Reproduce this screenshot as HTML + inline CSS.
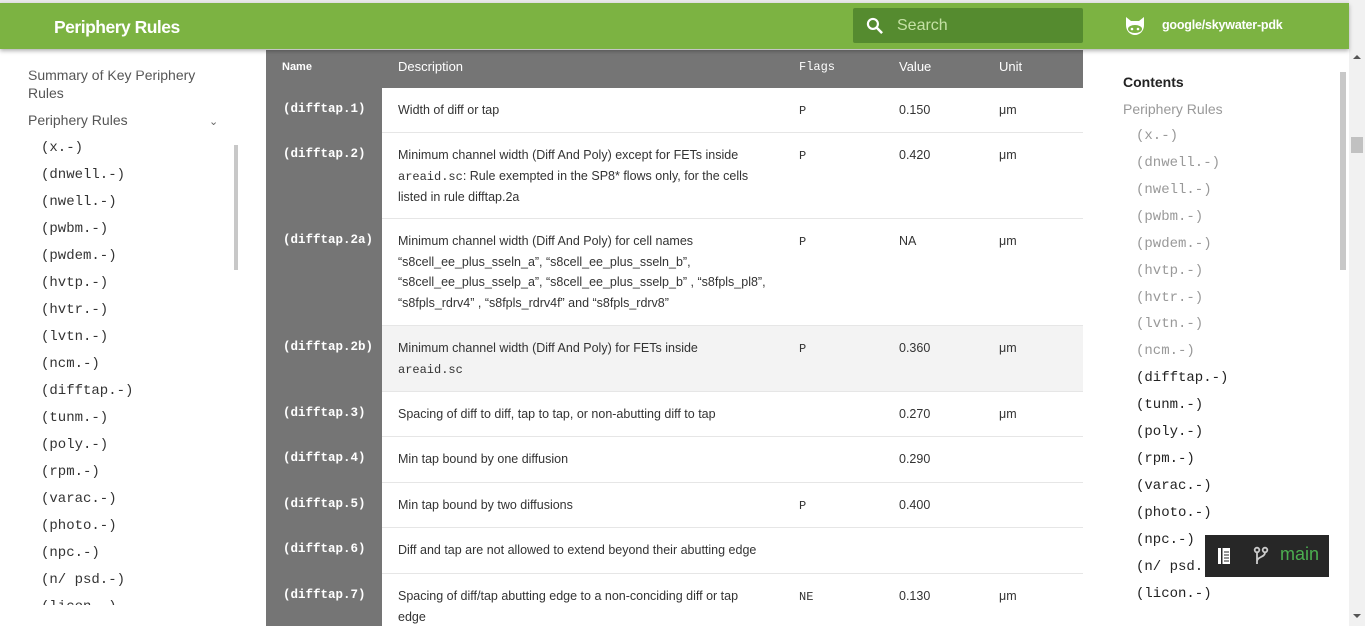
<!DOCTYPE html>
<html><head><meta charset="utf-8"><style>
*{margin:0;padding:0;box-sizing:border-box}
body{width:1365px;height:626px;overflow:hidden;background:#fff;font-family:"Liberation Sans",sans-serif;position:relative;color:#333}
.mono{font-family:"Liberation Mono",monospace}
.hdr{position:absolute;left:0;top:3px;width:1349px;height:46px;background:#7cb342;box-shadow:0 2px 4px rgba(0,0,0,.3);z-index:5}
.topline{position:absolute;left:0;top:0;width:1365px;height:3px;background:#e8e8e8}
.title{position:absolute;left:54px;top:14px;color:#fff;font-size:17.5px;font-weight:bold;letter-spacing:-.5px}
.search{position:absolute;left:853px;top:5px;width:230px;height:35px;background:#558b2f;border-radius:2px}
.search span{position:absolute;left:44px;top:9px;color:#c5e1a5;font-size:16px}
.repo{position:absolute;left:1162px;top:15px;color:#fff;font-size:12.5px;font-weight:bold;letter-spacing:-.2px}
.sb{position:absolute;left:1349px;top:0;width:16px;height:626px;background:#f1f1f1}
.lnav{position:absolute;left:28px;font-size:14px;color:#555}
.litem{position:absolute;left:41px;font-size:14px;color:#333}
.ritem{position:absolute;left:1136px;font-size:14px;color:#999}
.tbl{position:absolute;left:266px;top:50px;width:817px;height:576px;background:#fff}
.namecol{position:absolute;left:0;top:0;width:116px;height:576px;background:#757575}
.th{position:absolute;top:0;left:0;width:817px;height:38px;background:#757575}
.th span{position:absolute;top:9px;color:#fff;font-size:13px}
.row{position:absolute;left:116px;width:701px;border-bottom:1px solid #e6e6e6}
.row .n{position:absolute;left:-99px;top:14px;color:#fff;font-weight:bold;font-size:12.5px;font-family:"Liberation Mono",monospace}
.row .d{position:absolute;left:16px;top:12px;width:370px;font-size:12.5px;line-height:20.5px;color:#333}
.row .f{position:absolute;left:417px;top:16px;font-size:12px;font-family:"Liberation Mono",monospace}
.row .v{position:absolute;left:517px;top:15px;font-size:12.5px}
.row .u{position:absolute;left:617px;top:15px;font-size:12.5px}
.row .bg{position:absolute;left:0;top:0;right:0;bottom:0}
code{font-family:"Liberation Mono",monospace;font-size:12px}
</style></head><body>
<div class="topline"></div>
<div class="hdr">
 <div class="title">Periphery Rules</div>
 <div class="search"><svg style="position:absolute;left:12px;top:8px" width="20" height="20" viewBox="0 0 24 24"><circle cx="9.5" cy="9.5" r="6" fill="none" stroke="#fff" stroke-width="2.6"/><path d="M14 14l6.5 6.5" stroke="#fff" stroke-width="3"/></svg><span>Search</span></div>
 <svg style="position:absolute;left:1124px;top:13px" width="22" height="20" viewBox="0 0 22 20"><path d="M2 1l5 4h8l5-4v8c0 6-4 10-9 10S2 15 2 9z" fill="#fff"/><ellipse cx="11" cy="13" rx="7" ry="4" fill="#7cb342"/><circle cx="8" cy="13" r="1.3" fill="#fff"/><circle cx="14" cy="13" r="1.3" fill="#fff"/></svg>
 <div class="repo">google/skywater-pdk</div>
</div>
<div class="sb"><div style="position:absolute;left:2px;top:137px;width:12px;height:16px;background:#c1c1c1"></div><div style="position:absolute;left:4px;top:55px;border:4px solid transparent;border-bottom-color:#555;border-top:0"></div><div style="position:absolute;left:4px;top:614px;border:4px solid transparent;border-top-color:#555;border-bottom:0"></div></div>

<div class="lnav" style="top:66px;line-height:18px">Summary of Key Periphery<br>Rules</div>
<div style="position:absolute;left:0;top:49px;width:266px;height:24px;background:linear-gradient(#fff 0,#fff 60%,rgba(255,255,255,0))"></div>
<div class="lnav" style="top:112px">Periphery Rules</div>
<div style="position:absolute;left:209px;top:115px;font-size:11px;color:#666">&#8964;</div>
<div style="position:absolute;left:234px;top:145px;width:4px;height:125px;background:#c8c8c8"></div>
<div class="mono">
<div class="litem" style="top:140px">(x.-)</div>
<div class="litem" style="top:167px">(dnwell.-)</div>
<div class="litem" style="top:194px">(nwell.-)</div>
<div class="litem" style="top:221px">(pwbm.-)</div>
<div class="litem" style="top:248px">(pwdem.-)</div>
<div class="litem" style="top:275px">(hvtp.-)</div>
<div class="litem" style="top:302px">(hvtr.-)</div>
<div class="litem" style="top:329px">(lvtn.-)</div>
<div class="litem" style="top:356px">(ncm.-)</div>
<div class="litem" style="top:383px">(difftap.-)</div>
<div class="litem" style="top:410px">(tunm.-)</div>
<div class="litem" style="top:437px">(poly.-)</div>
<div class="litem" style="top:464px">(rpm.-)</div>
<div class="litem" style="top:491px">(varac.-)</div>
<div class="litem" style="top:518px">(photo.-)</div>
<div class="litem" style="top:545px">(npc.-)</div>
<div class="litem" style="top:572px">(n/ psd.-)</div>
<div class="litem" style="top:599px;height:6px;overflow:hidden">(licon.-)</div>
</div>

<div class="tbl">
 <div class="namecol"></div>
 <div class="th"><span style="left:16px;font-size:11px;font-weight:bold;top:11px">Name</span><span style="left:132px">Description</span><span style="left:533px;font-family:'Liberation Mono',monospace;font-size:12px;top:10px">Flags</span><span style="left:633px">Value</span><span style="left:733px">Unit</span></div>
 <div class="row" style="top:38px;height:45px"><div class="n">(difftap.1)</div><div class="d">Width of diff or tap</div><div class="f">P</div><div class="v">0.150</div><div class="u">μm</div></div>
 <div class="row" style="top:83px;height:86px"><div class="n">(difftap.2)</div><div class="d">Minimum channel width (Diff And Poly) except for FETs inside <code>areaid.sc</code>: Rule exempted in the SP8* flows only, for the cells listed in rule difftap.2a</div><div class="f">P</div><div class="v">0.420</div><div class="u">μm</div></div>
 <div class="row" style="top:169px;height:107px"><div class="n">(difftap.2a)</div><div class="d" style="width:380px">Minimum channel width (Diff And Poly) for cell names “s8cell_ee_plus_sseln_a”, “s8cell_ee_plus_sseln_b”, “s8cell_ee_plus_sselp_a”, “s8cell_ee_plus_sselp_b” , “s8fpls_pl8”, “s8fpls_rdrv4” , “s8fpls_rdrv4f” and “s8fpls_rdrv8”</div><div class="f">P</div><div class="v">NA</div><div class="u">μm</div></div>
 <div class="row" style="top:276px;height:66px"><div class="bg" style="background:#f3f3f3"></div><div class="n">(difftap.2b)</div><div class="d">Minimum channel width (Diff And Poly) for FETs inside<br><code>areaid.sc</code></div><div class="f">P</div><div class="v">0.360</div><div class="u">μm</div></div>
 <div class="row" style="top:342px;height:45px"><div class="n">(difftap.3)</div><div class="d" style="width:450px">Spacing of diff to diff, tap to tap, or non-abutting diff to tap</div><div class="v">0.270</div><div class="u">μm</div></div>
 <div class="row" style="top:387px;height:46px"><div class="n">(difftap.4)</div><div class="d">Min tap bound by one diffusion</div><div class="v">0.290</div></div>
 <div class="row" style="top:433px;height:45px"><div class="n">(difftap.5)</div><div class="d">Min tap bound by two diffusions</div><div class="f">P</div><div class="v">0.400</div></div>
 <div class="row" style="top:478px;height:46px"><div class="n">(difftap.6)</div><div class="d" style="width:450px">Diff and tap are not allowed to extend beyond their abutting edge</div></div>
 <div class="row" style="top:524px;height:60px;border:0"><div class="n">(difftap.7)</div><div class="d">Spacing of diff/tap abutting edge to a non-conciding diff or tap edge</div><div class="f">NE</div><div class="v">0.130</div><div class="u">μm</div></div>
</div>

<div style="position:absolute;left:1123px;top:74px;font-size:14px;font-weight:bold;color:#222">Contents</div>
<div style="position:absolute;left:1123px;top:101px;font-size:14px;color:#999">Periphery Rules</div>
<div style="position:absolute;left:1340px;top:72px;width:6px;height:198px;background:#c8c8c8"></div>
<div class="mono">
<div class="ritem" style="top:128px">(x.-)</div>
<div class="ritem" style="top:155px">(dnwell.-)</div>
<div class="ritem" style="top:182px">(nwell.-)</div>
<div class="ritem" style="top:209px">(pwbm.-)</div>
<div class="ritem" style="top:236px">(pwdem.-)</div>
<div class="ritem" style="top:263px">(hvtp.-)</div>
<div class="ritem" style="top:290px">(hvtr.-)</div>
<div class="ritem" style="top:316px">(lvtn.-)</div>
<div class="ritem" style="top:343px">(ncm.-)</div>
<div class="ritem" style="top:370px;color:#222">(difftap.-)</div>
<div class="ritem" style="top:397px;color:#222">(tunm.-)</div>
<div class="ritem" style="top:424px;color:#222">(poly.-)</div>
<div class="ritem" style="top:451px;color:#222">(rpm.-)</div>
<div class="ritem" style="top:478px;color:#222">(varac.-)</div>
<div class="ritem" style="top:505px;color:#222">(photo.-)</div>
<div class="ritem" style="top:532px;color:#222">(npc.-)</div>
<div class="ritem" style="top:559px;color:#222">(n/ psd.-)</div>
<div class="ritem" style="top:586px;color:#222">(licon.-)</div>
</div>
<div style="position:absolute;left:1205px;top:535px;width:124px;height:42px;background:#272727;z-index:6">
 <svg style="position:absolute;left:12px;top:12px" width="14" height="18" viewBox="0 0 14 18"><rect x="1" y="1" width="12" height="16" fill="#fff"/><rect x="4" y="1" width="1.5" height="16" fill="#272727"/><path d="M7 5h5M7 8h5M7 11h5M7 14h5" stroke="#272727" stroke-width="1"/></svg>
 <svg style="position:absolute;left:48px;top:11px" width="16" height="20" viewBox="0 0 16 20"><circle cx="4" cy="4" r="2.3" fill="none" stroke="#ccc" stroke-width="1.8"/><circle cx="12" cy="4" r="2.3" fill="none" stroke="#ccc" stroke-width="1.8"/><path d="M4 6.5V18M12 6.5c0 5-8 4-8 9" fill="none" stroke="#ccc" stroke-width="1.8"/></svg>
 <div style="position:absolute;left:75px;top:9px;color:#4caf50;font-size:18px">main</div>
</div>
</body></html>
